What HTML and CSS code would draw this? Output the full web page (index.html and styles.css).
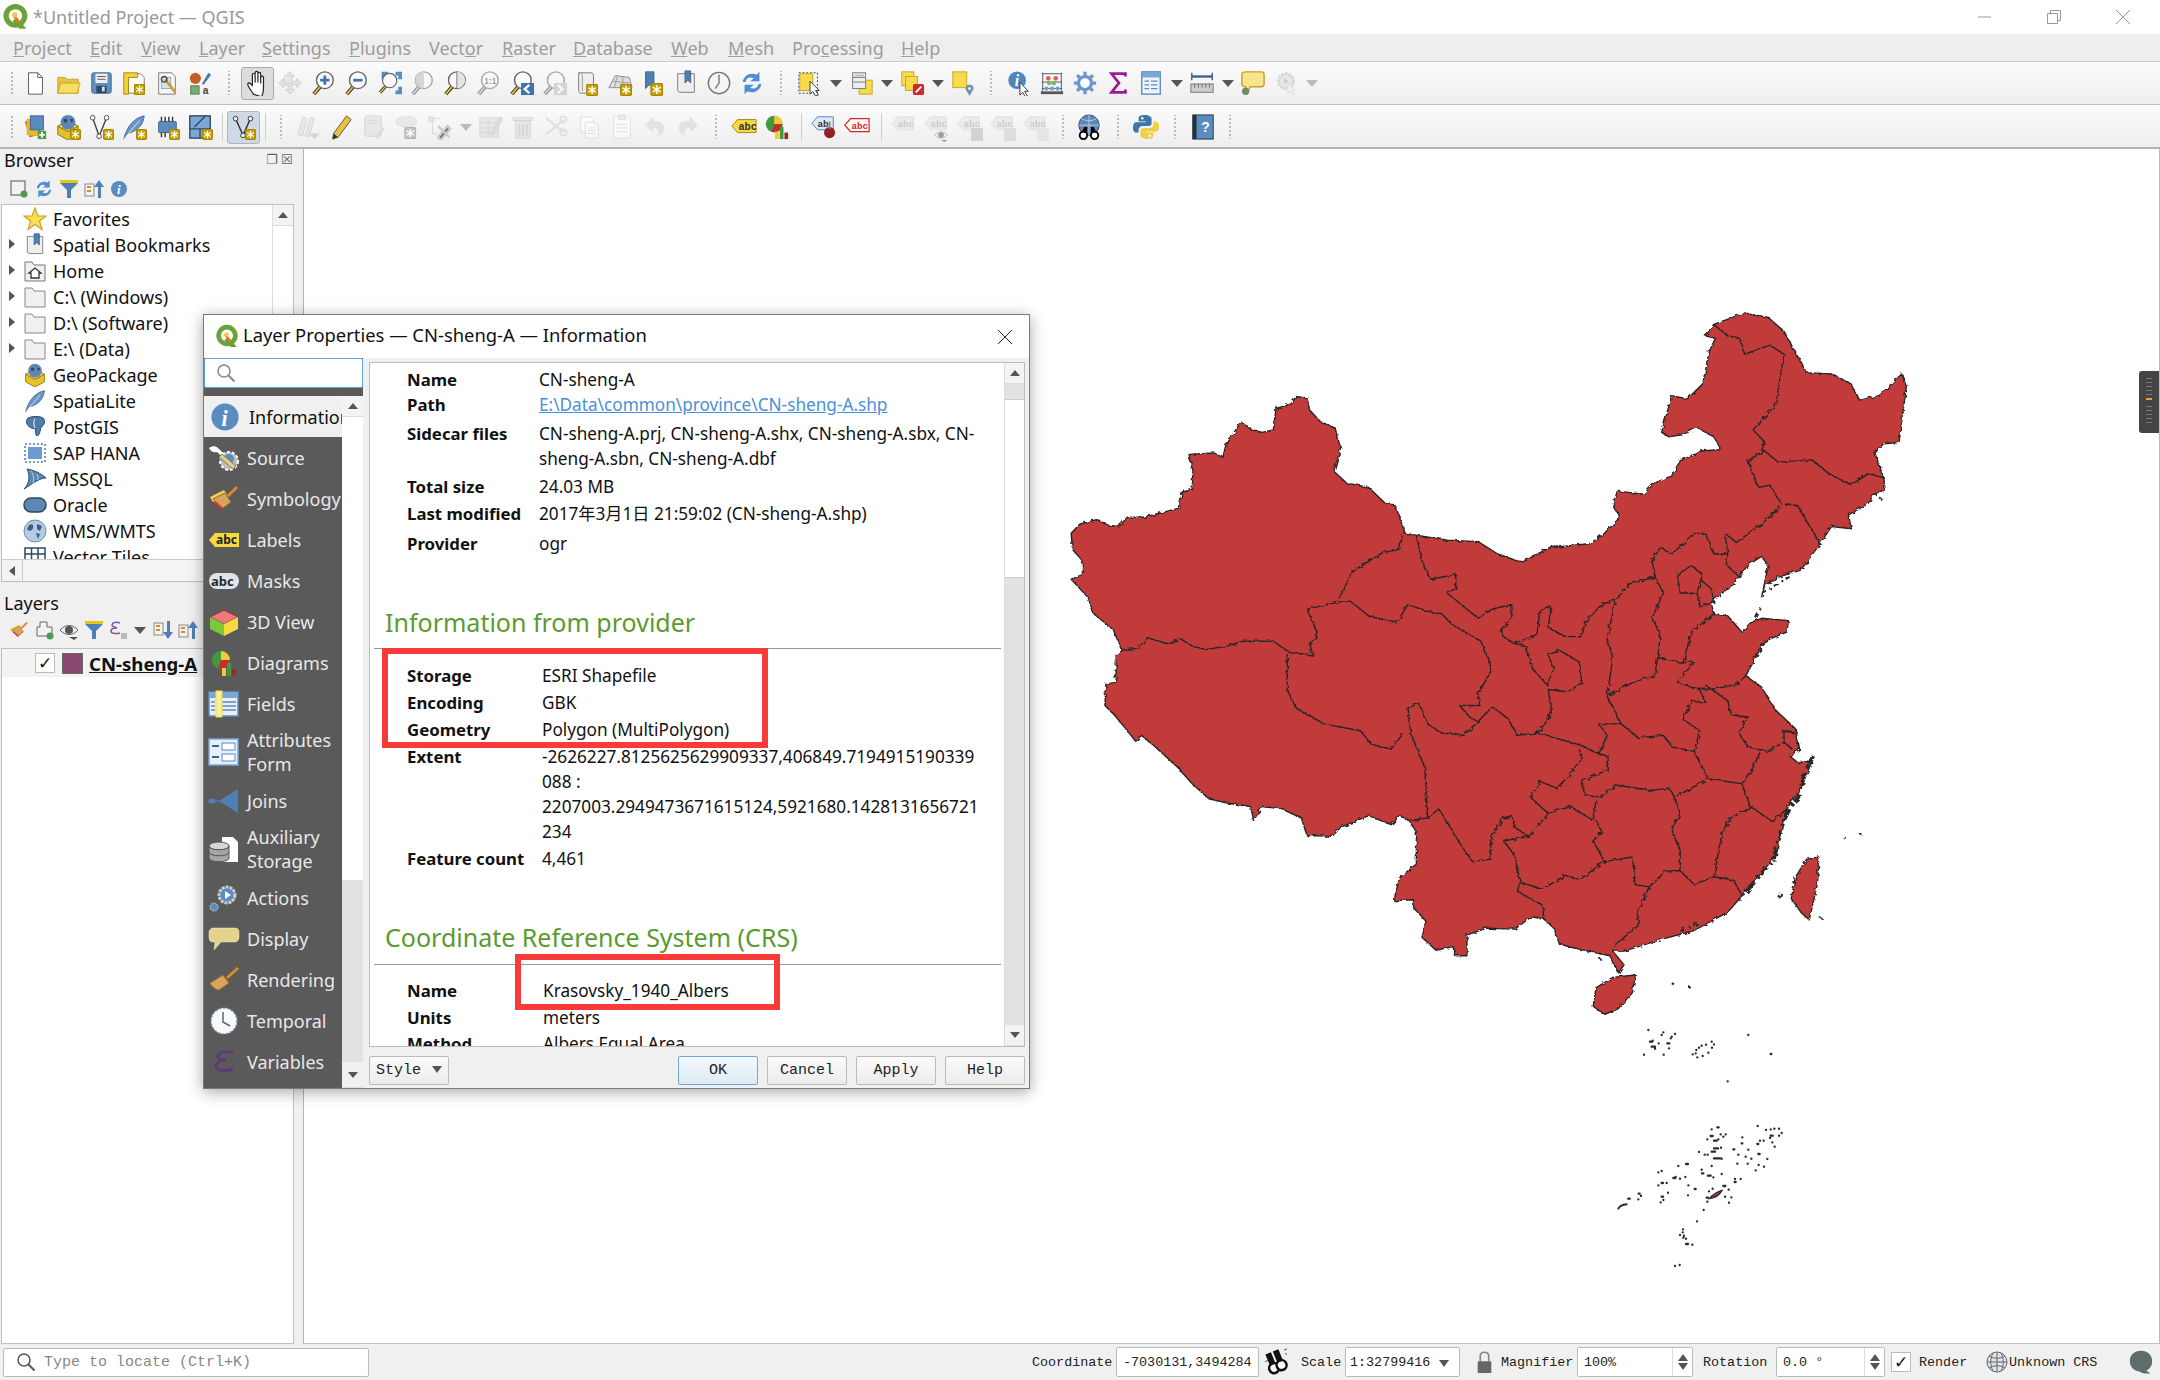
FILE: index.html
```html
<!DOCTYPE html>
<html lang="en">
<head>
<meta charset="utf-8">
<title>*Untitled Project — QGIS</title>
<link rel="stylesheet" href="styles.css">
</head>
<body>
<svg class="defs" width="0" height="0">
  <defs>
    <filter id="rough" x="-2%" y="-2%" width="104%" height="104%">
      <feTurbulence type="fractalNoise" baseFrequency="0.11" numOctaves="2" seed="4" result="n"/>
      <feDisplacementMap in="SourceGraphic" in2="n" scale="9"/>
    </filter>
    <symbol id="logo" viewBox="0 0 24 24"><circle cx="11.5" cy="11" r="8" fill="#fff" stroke="#6aa33a" stroke-width="4.5"/><path d="M13 13l8 9h-6l-6-7z" fill="#6aa33a"/><path d="M10 9l6 7-3 1-4-6z" fill="#ee7913"/><circle cx="11" cy="10" r="2.2" fill="#f2c94c"/></symbol>
    <symbol id="badge" viewBox="0 0 10 10"><rect x=".5" y=".5" width="9" height="9" rx="1" fill="#c9a100" stroke="#a88600"/><path d="M5 1.5v7M2 3.2l6 3.6M8 3.2L2 6.8" stroke="#fff" stroke-width="1.2"/></symbol>
    <symbol id="mag" viewBox="0 0 28 28"><path d="M4 26l7-8" stroke="#222" stroke-width="4"/><path d="M4 26l7-8" stroke="#e9c13a" stroke-width="2"/><circle cx="16" cy="11" r="9" fill="#fafafa" stroke="#666" stroke-width="1.5"/></symbol>
    <symbol id="new" viewBox="0 0 28 28"><path d="M7 3h10l5 5v18H7z" fill="#fff" stroke="#555"/><path d="M17 3v5h5" fill="none" stroke="#555"/></symbol>
    <symbol id="open" viewBox="0 0 28 28"><path d="M3 8h8l2 2h12v15H3z" fill="#e6c24a" stroke="#c9a227"/><path d="M3 25l3-11h21l-3 11z" fill="#f8dc66" stroke="#c9a227"/></symbol>
    <symbol id="save" viewBox="0 0 28 28"><rect x="4" y="3" width="21" height="22" rx="2" fill="#5f8fbf" stroke="#44698f"/><rect x="8" y="4" width="13" height="10" fill="#eee"/><path d="M10 7h9M10 10h9" stroke="#555"/><rect x="9" y="17" width="11" height="8" fill="#2f4a66"/><rect x="15" y="18" width="3" height="5" fill="#ddd"/></symbol>
    <symbol id="layout" viewBox="0 0 28 28"><path d="M8 4h13l4 4v17H8z" fill="#fff" stroke="#777"/><path d="M3 3h15v5H8v18H3z" fill="#f3d23f" stroke="#a88600"/><use href="#badge" x="14" y="15" width="12" height="12"/></symbol>
    <symbol id="print" viewBox="0 0 28 28"><path d="M5 3h14l4 4v19H5z" fill="#f7f7f7" stroke="#777"/><rect x="8" y="8" width="10" height="12" fill="#d5e2f2" stroke="#8aa5c9"/><path d="M12 10l11 14" stroke="#c9a227" stroke-width="3"/><circle cx="11" cy="10" r="3" fill="none" stroke="#555" stroke-width="1.6"/></symbol>
    <symbol id="style" viewBox="0 0 28 28"><circle cx="9" cy="9" r="6" fill="#c65c2c"/><rect x="4" y="17" width="9" height="9" fill="#7aa97a" stroke="#4f7d4f"/><path d="M16 15l7-12 3 2-8 11z" fill="#4d79ad"/><text x="17" y="26" class="svgt" font-size="11" fill="#444">a</text></symbol>
    <symbol id="pan" viewBox="0 0 28 28"><path d="M10 26c-2-4-6-8-6-11 1-2 3-1 5 2V5c0-2 3-2 3 0v8-10c0-2 3-2 3 0v10-9c0-2 3-2 3 0v10-6c0-2 3-2 3 0v11c0 5-1 7-2 10z" fill="#fff" stroke="#222" stroke-width="1.3" stroke-linejoin="round"/></symbol>
    <symbol id="pansel" viewBox="0 0 28 28"><path d="M14 2l5 5h-3v5h5V9l5 5-5 5v-3h-5v5h3l-5 5-5-5h3v-5H7v3l-5-5 5-5v3h5V7H9z" fill="#d0d4d8" stroke="#b0b4b8"/><rect x="8" y="6" width="8" height="8" fill="#ddd" stroke="#bbb"/></symbol>
    <symbol id="zin" viewBox="0 0 28 28"><use href="#mag" width="28" height="28"/><path d="M11 11h10M16 6v10" stroke="#3f73ad" stroke-width="3"/></symbol>
    <symbol id="zout" viewBox="0 0 28 28"><use href="#mag" width="28" height="28"/><path d="M11 11h10" stroke="#3f73ad" stroke-width="3"/></symbol>
    <symbol id="zfull" viewBox="0 0 28 28"><path d="M6 2h7v4H10v4H6zM21 2h7v8h-4V6h-3zM28 26h-7v-4h3v-4h4z" fill="#5b8cc0"/><use href="#mag" x="1" y="2" width="24" height="24"/></symbol>
    <symbol id="zlayer" viewBox="0 0 28 28"><use href="#mag" width="28" height="28"/><path d="M16 2a9 9 0 0 0 0 18z" fill="#bbb"/></symbol>
    <symbol id="zsel" viewBox="0 0 28 28"><use href="#mag" width="28" height="28"/><path d="M16 2a9 9 0 0 1 0 18z" fill="#e5e5e5"/><path d="M16 2v18" stroke="#777"/></symbol>
    <symbol id="z11" viewBox="0 0 28 28"><use href="#mag" width="28" height="28"/><text x="10" y="15" class="svgt" font-size="9" fill="#555">1:1</text></symbol>
    <symbol id="zlast" viewBox="0 0 28 28"><use href="#mag" width="28" height="28"/><rect x="14" y="14" width="14" height="13" fill="#3f73ad"/><path d="M23 16l-5 4.500 5 4.500" fill="none" stroke="#fff" stroke-width="2.500"/></symbol>
    <symbol id="znext" viewBox="0 0 28 28"><use href="#mag" width="28" height="28"/><rect x="14" y="14" width="14" height="13" fill="#bbb"/><path d="M18 16l5 4.500-5 4.500" fill="none" stroke="#fff" stroke-width="2.500"/></symbol>
    <symbol id="mapnew" viewBox="0 0 28 28"><path d="M5 3h13c2 0 3 1 3 3v19H8c-2 0-3-1-3-3z" fill="#eee" stroke="#777"/><path d="M5 3c3 0 4 1 4 3v17" fill="none" stroke="#999"/><use href="#badge" x="13" y="15" width="13" height="13"/></symbol>
    <symbol id="map3d" viewBox="0 0 28 28"><path d="M2 19L9 6l15 2 3 11z" fill="#ddd" stroke="#888"/><path d="M6 12l18 2M11 7l-3 12M17 7l0 12" stroke="#999"/><use href="#badge" x="14" y="15" width="13" height="13"/></symbol>
    <symbol id="bmnew" viewBox="0 0 28 28"><path d="M6 2h9v18l-5-4-4 4z" fill="#4f80b5" stroke="#3b628d"/><use href="#badge" x="11" y="14" width="14" height="14"/></symbol>
    <symbol id="bm" viewBox="0 0 28 28"><path d="M5 4h18v20H8c-2 0-3-1-3-3z" fill="#eee" stroke="#777"/><path d="M13 1h6v13l-3-3-3 3z" fill="#4f80b5" stroke="#3b628d"/></symbol>
    <symbol id="clock" viewBox="0 0 28 28"><circle cx="14" cy="14" r="11.500" fill="#f5f5f5" stroke="#777" stroke-width="1.5"/><path d="M14 5v9l-4 6" fill="none" stroke="#777" stroke-width="1.5"/></symbol>
    <symbol id="refresh" viewBox="0 0 28 28"><path d="M4 13C5 6 12 2 19 5l3-3v10H12l4-3c-4-2-8-1-9 4z" fill="#4e8ed0"/><path d="M24 15c-1 7-8 11-15 8l-3 3V16h10l-4 3c4 2 8 1 9-4z" fill="#4e8ed0"/></symbol>
    <symbol id="select" viewBox="0 0 28 28"><rect x="2" y="3" width="20" height="22" fill="none" stroke="#333" stroke-dasharray="2 2"/><rect x="3" y="4" width="14" height="18" fill="#f6dc4b" stroke="#c9a227"/><path d="M14 12v14l3-3 3 5 3-1-3-5h4z" fill="#fff" stroke="#333"/></symbol>
    <symbol id="attrsel" viewBox="0 0 28 28"><rect x="12" y="11" width="14" height="15" fill="#f6dc4b" stroke="#c9a227"/><rect x="5" y="3" width="14" height="17" fill="#eee" stroke="#777"/><path d="M5 8h14M5 13h14" stroke="#777"/><rect x="7" y="5" width="10" height="2" fill="#bbb"/></symbol>
    <symbol id="desel" viewBox="0 0 28 28"><rect x="3" y="2" width="13" height="15" fill="#f6dc4b" stroke="#c9a227"/><rect x="7" y="7" width="13" height="15" fill="#f6dc4b" stroke="#c9a227"/><rect x="15" y="15" width="12" height="12" rx="2" fill="#d02b2b"/><path d="M18 24l6-6" stroke="#fff" stroke-width="2"/></symbol>
    <symbol id="selloc" viewBox="0 0 28 28"><rect x="3" y="2" width="15" height="17" fill="#f6dc4b" stroke="#c9a227"/><path d="M21 28l-4-7c-1-3 1-5 4-5s5 2 4 5z" fill="#6f93a8"/><circle cx="21" cy="20" r="1.500" fill="#fff"/></symbol>
    <symbol id="identify" viewBox="0 0 28 28"><circle cx="12" cy="11" r="9.500" fill="#4e86bf"/><text x="9.500" y="17" class="svgi" font-size="17" fill="#fff">i</text><path d="M15 13v14l3-3 3 5 2-1-3-5h4z" fill="#fff" stroke="#333"/></symbol>
    <symbol id="abacus" viewBox="0 0 28 28"><path d="M3 4h22M4 3v22M24 3v22M3 13h22M3 20h22" stroke="#555" fill="none"/><rect x="2" y="23" width="24" height="3" fill="#555"/><circle cx="10" cy="9" r="2.500" fill="#d8635e"/><circle cx="18" cy="9" r="2.500" fill="#d8635e"/><circle cx="11" cy="14" r="2.500" fill="#7fb36b"/><circle cx="16" cy="14" r="2.500" fill="#7fb36b"/><circle cx="8" cy="20" r="2.300" fill="#6da0d4"/><circle cx="14" cy="20" r="2.300" fill="#6da0d4"/><circle cx="20" cy="20" r="2.300" fill="#6da0d4"/></symbol>
    <symbol id="gear" viewBox="0 0 28 28"><circle cx="14" cy="14" r="7" fill="#fff" stroke="#6a97cc" stroke-width="3.500"/><path d="M14 2v5M14 21v5M2 14h5M21 14h5M5.500 5.500l3.500 3.500M19 19l3.500 3.500M22.500 5.500L19 9M9 19l-3.500 3.500" stroke="#6a97cc" stroke-width="3.500"/></symbol>
    <symbol id="sigma" viewBox="0 0 28 28"><path d="M22 7V4H7l8 10-8 10h15v-3" fill="none" stroke="#9a1b9a" stroke-width="3"/></symbol>
    <symbol id="table" viewBox="0 0 28 28"><rect x="4" y="2" width="20" height="24" fill="#eef3fa" stroke="#5b8cc0" stroke-width="1.5"/><rect x="4" y="2" width="20" height="6" fill="#7ba6d6"/><path d="M7 12h5M14 12h7M7 16h5M14 16h7M7 20h5M14 20h7" stroke="#5b8cc0" stroke-width="1.5"/></symbol>
    <symbol id="measure" viewBox="0 0 28 28"><path d="M3 7h22" stroke="#3b5f86" stroke-width="2.500"/><path d="M3 3v8M25 3v8" stroke="#3b5f86" stroke-width="1.5"/><rect x="2" y="15" width="24" height="9" fill="#ccc" stroke="#777"/><path d="M6 15v4M10 15v4M14 15v4M18 15v4M22 15v4" stroke="#666"/></symbol>
    <symbol id="tip" viewBox="0 0 28 28"><path d="M6 2h17c2 0 3 1 3 3v10c0 2-1 3-3 3H11l-3 7-2-7c-3 0-4-1-4-3V5c0-2 2-3 4-3z" fill="#f8e48a" stroke="#c9a227" stroke-width="1.500"/><circle cx="6" cy="23" r="3.500" fill="#5c9b54" stroke="#777"/></symbol>
    <symbol id="action" viewBox="0 0 28 28"><circle cx="14" cy="12" r="8" fill="#ddd" stroke="#bbb" stroke-width="3" stroke-dasharray="3 1"/><path d="M12 9l5 3-5 3z" fill="#aaa"/><path d="M16 14v11l3-2 2 4 2-1-2-4h3z" fill="#eee" stroke="#ccc"/></symbol>
    <symbol id="dsm" viewBox="0 0 28 28"><path d="M3 8l13-3 5 17-13 3z" fill="#d0652c"/><path d="M5 5l14 1-1 18-13-1z" fill="#e5b72e"/><rect x="9" y="2" width="14" height="15" fill="#5b8cc0" stroke="#3b628d"/><rect x="17" y="18" width="9" height="9" fill="#4e9a4e"/><path d="M21.500 19.500v6M18.500 22.500h6" stroke="#fff" stroke-width="2"/></symbol>
    <symbol id="gpkg" viewBox="0 0 28 28"><path d="M3 13l11 6 11-6v9l-11 6-11-6z" fill="#e6c229" stroke="#8a7410"/><path d="M3 13l11-6 11 6-11 6z" fill="#f4da55" stroke="#8a7410"/><circle cx="14" cy="9" r="8" fill="#5f87b5"/><path d="M9 6c3-2 5 0 4 2s-4 2-4-2zM16 5l4 1-2 4z" fill="#2d4a6d"/></symbol>
    <symbol id="shp" viewBox="0 0 28 28"><path d="M5 4l7 20 8-20" fill="none" stroke="#444" stroke-width="1.500"/><circle cx="5" cy="4" r="2.500" fill="#fff" stroke="#444"/><circle cx="20" cy="4" r="2.500" fill="#fff" stroke="#444"/><circle cx="12" cy="24" r="2.500" fill="#fff" stroke="#444"/></symbol>
    <symbol id="feather" viewBox="0 0 28 28"><path d="M3 27C6 14 14 4 25 2c-1 9-6 16-18 19z" fill="#6d95c4" stroke="#3f6ba3"/><path d="M3 27L20 7" stroke="#e8eef6"/></symbol>
    <symbol id="chip" viewBox="0 0 28 28"><rect x="5" y="8" width="19" height="12" rx="1" fill="#5b8cc0" stroke="#3b628d"/><path d="M8 3v5M12 3v5M16 3v5M20 3v5M8 20v5M12 20v5" stroke="#333" stroke-width="1.500"/></symbol>
    <symbol id="grid" viewBox="0 0 28 28"><rect x="3" y="2" width="22" height="24" fill="#7ba6d6" stroke="#2f4a66" stroke-width="1.500"/><path d="M3 16h22M14 16v10M8 14L20 2" stroke="#2f4a66" stroke-width="1.500"/></symbol>
    <symbol id="vtx" viewBox="0 0 28 28"><path d="M6 5l8 18 8-18" fill="none" stroke="#333" stroke-width="1.500"/><circle cx="6" cy="5" r="2.500" fill="#eee" stroke="#333"/><circle cx="22" cy="5" r="2.500" fill="#eee" stroke="#333"/><circle cx="14" cy="23" r="2.500" fill="#eee" stroke="#333"/></symbol>
    <symbol id="edits" viewBox="0 0 28 28"><path d="M3 22L8 3l5 2-5 19zM11 24l6-21 4 2-6 19z" fill="#ddd" stroke="#bbb"/><path d="M15 21h12l-6 6z" fill="#bbb"/></symbol>
    <symbol id="pencil" viewBox="0 0 28 28"><path d="M6 21L20 2l5 4-14 19-6 2z" fill="#e9c13a" stroke="#555"/><path d="M6 21l5 4-6 2z" fill="#333"/></symbol>
    <symbol id="savee" viewBox="0 0 28 28"><rect x="4" y="2" width="18" height="22" rx="2" fill="#ddd" stroke="#bbb"/><path d="M8 7h10M8 10h10" stroke="#bbb"/><path d="M15 25l8-11 3 2-8 11z" fill="#ccc"/></symbol>
    <symbol id="addpoly" viewBox="0 0 28 28"><path d="M3 6c5-4 10-4 16-3s7 8 3 9l-6 3-8-2c-4 0-7-3-5-7z" fill="#ddd" stroke="#ccc"/><use href="#badge" x="11" y="14" width="13" height="13"/></symbol>
    <symbol id="vtool" viewBox="0 0 28 28"><path d="M4 5h10M6 5v16M4 5v4M6 21h5" stroke="#bbb" fill="none"/><rect x="2" y="3" width="5" height="5" fill="#ddd" stroke="#bbb"/><path d="M12 25l10-12 3 3-10 12zM12 13l12 12" stroke="#aaa" stroke-width="2.500"/></symbol>
    <symbol id="edit2" viewBox="0 0 28 28"><rect x="3" y="4" width="20" height="21" fill="#ddd" stroke="#c4c4a8"/><path d="M3 9h20M3 15h20M3 20h20M12 4v21" stroke="#bbb"/><path d="M14 22L25 3l3 2-11 18z" fill="#ccc" stroke="#bbb"/></symbol>
    <symbol id="trash" viewBox="0 0 28 28"><path d="M3 4h22v3H3zM6 8h16v18H6z" fill="#ddd" stroke="#c4bcbc"/><path d="M10 11v12M14 11v12M18 11v12" stroke="#bbb" stroke-width="2"/></symbol>
    <symbol id="cut" viewBox="0 0 28 28"><path d="M3 4l20 16M3 22L23 6" stroke="#ccc" stroke-width="2"/><circle cx="22" cy="6" r="3.500" fill="none" stroke="#ccc" stroke-width="2"/><circle cx="22" cy="20" r="3.500" fill="none" stroke="#ccc" stroke-width="2"/></symbol>
    <symbol id="copy" viewBox="0 0 28 28"><path d="M5 3h11l3 3v14H5z" fill="#fff" stroke="#ccc"/><path d="M10 9h11l3 3v14H10z" fill="#fff" stroke="#ccc"/><path d="M13 15h8M13 18h8M13 21h8" stroke="#ccc"/></symbol>
    <symbol id="paste" viewBox="0 0 28 28"><rect x="5" y="3" width="18" height="23" fill="#fff" stroke="#ccc"/><rect x="10" y="1" width="8" height="5" fill="#ddd" stroke="#ccc"/><path d="M8 11h12M8 15h12M8 19h12" stroke="#ccc"/></symbol>
    <symbol id="undo" viewBox="0 0 28 28"><path d="M12 3L3 12l9 8v-5c4 0 6 2 6 5 0 2-2 4-2 4 6-2 8-6 8-9 0-5-5-8-12-8z" fill="#d5d5d5"/></symbol>
    <symbol id="redo" viewBox="0 0 28 28"><path d="M16 3l9 9-9 8v-5c-4 0-6 2-6 5 0 2 2 4 2 4-6-2-8-6-8-9 0-5 5-8 12-8z" fill="#d5d5d5"/></symbol>
    <symbol id="tagY" viewBox="0 0 28 28"><path d="M1 13l6-7h20v14H7z" fill="#f4d93f" stroke="#9a8410"/><text x="8" y="17" class="svgm" font-size="11" fill="#333">abc</text></symbol>
    <symbol id="diag" viewBox="0 0 28 28"><circle cx="11" cy="11" r="9" fill="#3d9b3d"/><path d="M11 11V2a9 9 0 0 1 9 9z" fill="#f3c93c"/><path d="M11 11h9a9 9 0 0 1-12 8z" fill="#c92b2b"/><rect x="12" y="19" width="4" height="8" fill="#f3c93c"/><rect x="17" y="14" width="4" height="13" fill="#3d9b3d"/><rect x="22" y="20" width="4" height="7" fill="#9b2b2b"/></symbol>
    <symbol id="tagB" viewBox="0 0 28 28"><path d="M1 10l6-7h17v14H7z" fill="#dbe9f8" stroke="#4f80b5"/><text x="7" y="14" class="svgm" font-size="10" fill="#333">ab</text><circle cx="20" cy="20" r="6" fill="#8e2323"/><path d="M20 8v8" stroke="#888" stroke-width="2"/></symbol>
    <symbol id="tagR" viewBox="0 0 28 28"><path d="M1 12l6-7h20v14H7z" fill="#fff" stroke="#e02020" stroke-width="1.300"/><text x="8" y="16" class="svgm" font-size="10" fill="#e02020">abc</text></symbol>
    <symbol id="tagG" viewBox="0 0 28 28"><path d="M1 10l6-7h17v14H7z" fill="#e5e3da" stroke="#ccc"/><text x="7" y="14" class="svgm" font-size="10" fill="#aaa">abc</text></symbol>
    <symbol id="meta" viewBox="0 0 28 28"><circle cx="14" cy="12" r="11" fill="#5f87b5" stroke="#2f4a66"/><path d="M3 12h22M14 1v22M6 5c5 3 11 3 16 0" fill="none" stroke="#b9cee5"/><circle cx="8" cy="23" r="4" fill="#fff" stroke="#000" stroke-width="2"/><circle cx="20" cy="23" r="4" fill="#fff" stroke="#000" stroke-width="2"/><path d="M6 20l3-6h3v6zM22 20l-3-6h-3v6z" fill="#000"/></symbol>
    <symbol id="extents" viewBox="0 0 24 28"><g transform="rotate(-22 12 14)"><rect x="5" y="3" width="6" height="12" fill="#111"/><rect x="13" y="3" width="6" height="12" fill="#111"/><circle cx="8" cy="19" r="5" fill="#fff" stroke="#111" stroke-width="2.500"/><circle cx="16" cy="19" r="5" fill="#fff" stroke="#111" stroke-width="2.500"/></g><path d="M20 2l3-1M21 6h2M4 12l-3 2" stroke="#555"/></symbol>
    <symbol id="python" viewBox="0 0 28 28"><path d="M13 1c-5 0-7 1-7 4v3h8v1H4c-3 0-4 2-4 6s2 5 4 5h2v-3c0-2 2-4 4-4h7c2 0 3-1 3-3V5c0-2-3-4-7-4z" fill="#3f76a8"/><path d="M15 27c5 0 7-1 7-4v-3h-8v-1h10c3 0 4-2 4-6s-2-5-4-5h-2v3c0 2-2 4-4 4h-7c-2 0-3 1-3 3v5c0 2 3 4 7 4z" fill="#f2cf4a"/><circle cx="10" cy="4.500" r="1.300" fill="#fff"/><circle cx="18" cy="23.500" r="1.300" fill="#fff"/></symbol>
    <symbol id="helpb" viewBox="0 0 28 28"><rect x="3" y="1" width="22" height="26" fill="#5b8cc0" stroke="#24303d"/><rect x="3" y="1" width="4" height="26" fill="#24303d"/><text x="12" y="19" class="svgt" font-size="15" fill="#fff">?</text></symbol>
    <symbol id="star" viewBox="0 0 24 24"><path d="M12 1l3 8h8l-6.500 5 2.500 8.500L12 17.500 5 22.500 7.500 14 1 9h8z" fill="#f7e04e" stroke="#c9a227" stroke-width="1.200"/></symbol>
    <symbol id="folder" viewBox="0 0 24 24"><path d="M2 3h7l2 3h11v16H2z" fill="#f0f0f0" stroke="#888"/></symbol>
    <symbol id="home" viewBox="0 0 24 24"><path d="M2 3h7l2 3h11v16H2z" fill="#f0f0f0" stroke="#777"/><path d="M6 14l6-5 6 5h-2v5H8v-5z" fill="#fff" stroke="#333" stroke-width="1.300"/></symbol>
    <symbol id="hana" viewBox="0 0 24 24"><rect x="2" y="3" width="20" height="18" fill="none" stroke="#4f7cac" stroke-dasharray="2 2" stroke-width="1.500"/><rect x="5" y="6" width="14" height="12" fill="#6d9ad0"/></symbol>
    <symbol id="pg" viewBox="0 0 24 24"><path d="M5 3c4-2 12-2 15 0 3 3 1 8-2 9-1 4-1 8-4 9-2-1-1-5-2-8-2 1-4 0-5-1-3-1-5-6-2-9z" fill="#4f7cac" stroke="#2f4a66"/><path d="M12 4c-2 3-1 7 0 9" fill="none" stroke="#fff"/></symbol>
    <symbol id="mssql" viewBox="0 0 24 24"><path d="M1 22C7 16 7 8 4 2c6 1 14 4 19 9-6 0-11 4-22 11z" fill="#5b87b5" stroke="#2f4a66"/><path d="M8 4c3 4 3 9 2 13M14 7c1 2 1 5 1 6" stroke="#b9cee5" fill="none"/></symbol>
    <symbol id="oracle" viewBox="0 0 24 24"><rect x="1" y="5" width="22" height="14" rx="7" fill="#5f87b5" stroke="#2f4a66" stroke-width="1.500"/></symbol>
    <symbol id="globe" viewBox="0 0 24 24"><circle cx="12" cy="12" r="11" fill="#b4cbe4" stroke="#6c8fb5"/><path d="M6 6c3-2 5 0 4 3s-4 4-6 1zM14 5l5 2-2 5-3-2zM13 14l4 1-2 5z" fill="#3f5c80"/></symbol>
    <symbol id="vt" viewBox="0 0 24 24"><rect x="2" y="3" width="20" height="18" fill="#fff" stroke="#2f4a66" stroke-width="1.500"/><path d="M2 9h20M2 15h20M8.500 3v18M15 3v18" stroke="#2f4a66" stroke-width="1.500"/></symbol>
    <symbol id="wrench" viewBox="0 0 32 28"><path d="M1 4c4-3 8-2 10 1l12 11-3 2L9 8C6 9 3 8 1 4z" fill="#fff"/><circle cx="21" cy="17" r="9" fill="#bcbcbc" stroke="#fff" stroke-dasharray="3 2" stroke-width="2"/><circle cx="21" cy="15" r="5" fill="#5b8cc0"/><path d="M14 10l14 12-3 3-14-12z" fill="#e6cf7a" stroke="#777"/></symbol>
    <symbol id="brush" viewBox="0 0 32 28"><path d="M2 14l14-5 5 8-7 8z" fill="#e03030"/><path d="M2 12L16 5l4 6-15 6z" fill="#f2cf4a"/><path d="M5 14l12-6 6 9-8 6z" fill="#d8a35c" stroke="#996b2c"/><path d="M20 11l9-9" stroke="#d68b2c" stroke-width="3"/></symbol>
    <symbol id="labelT" viewBox="0 0 32 28"><path d="M1 14l6-7h24v14H7z" fill="#f4d93f"/><text x="8" y="18" class="svgb" font-size="12" fill="#222">abc</text></symbol>
    <symbol id="masks" viewBox="0 0 32 28"><rect x="1" y="6" width="30" height="16" rx="8" fill="#dfe3ea"/><text x="3" y="19" class="svgb" font-size="13" fill="#2a2a30">abc</text></symbol>
    <symbol id="box3d" viewBox="0 0 32 28"><path d="M2 9l14-7 14 7-14 7z" fill="#ec7878" stroke="#8f3030"/><path d="M2 9v12l14 7V16z" fill="#7fc63a"/><path d="M30 9v12l-14 7V16z" fill="#f4d93f"/></symbol>
    <symbol id="fields" viewBox="0 0 32 28"><rect x="1" y="2" width="29" height="24" fill="#e8eff8" stroke="#5b8cc0" stroke-width="1.500"/><rect x="1" y="2" width="29" height="6" fill="#7ba6d6"/><path d="M14 12h14M14 16h14M14 20h14M3 12h4M3 16h4M3 20h4" stroke="#5b8cc0" stroke-width="1.500"/><rect x="8" y="1" width="6" height="26" fill="#f6ef9f" stroke="#f2e23b"/></symbol>
    <symbol id="form" viewBox="0 0 32 28"><rect x="1" y="1" width="29" height="26" fill="#e8eff8" stroke="#7ba6d6" stroke-width="1.500"/><rect x="14" y="5" width="13" height="7" fill="#fff" stroke="#5b8cc0"/><rect x="14" y="16" width="13" height="7" fill="#fff" stroke="#5b8cc0"/><path d="M4 8h7M4 19h7" stroke="#3b628d" stroke-width="2"/></symbol>
    <symbol id="joins" viewBox="0 0 32 28"><path d="M30 2v24L11 14z" fill="#4f80b5"/><ellipse cx="4" cy="14" rx="3.500" ry="2.500" fill="#4f80b5"/><path d="M7 14h5" stroke="#4f80b5"/></symbol>
    <symbol id="aux" viewBox="0 0 32 28"><path d="M14 2h11l5 5v20H14z" fill="#fff"/><ellipse cx="11" cy="11" rx="10" ry="4" fill="#d5d5d5" stroke="#555"/><path d="M1 11v12c0 5 20 5 20 0V11c0 5-20 5-20 0z" fill="#a5a5a5" stroke="#555"/><path d="M1 17c0 5 20 5 20 0" fill="none" stroke="#555"/></symbol>
    <symbol id="actions" viewBox="0 0 32 28"><circle cx="19" cy="11" r="8" fill="#5b8cc0" stroke="#ccc" stroke-width="3" stroke-dasharray="3 1"/><path d="M17 7l6 4-6 4z" fill="#fff"/><circle cx="6" cy="23" r="4" fill="#5b8cc0" stroke="#ccc" stroke-dasharray="2 1"/></symbol>
    <symbol id="display" viewBox="0 0 32 28"><path d="M5 3h22c3 0 4 2 4 4v5c0 3-2 5-4 5H13l-7 8 1-8H5c-3 0-4-2-4-5V7c0-2 2-4 4-4z" fill="#e3d38b" stroke="#fff" stroke-opacity=".4"/></symbol>
    <symbol id="render" viewBox="0 0 32 28"><path d="M2 17l13-8 6 8-10 7c-3 0-7-3-9-7z" fill="#d8a35c" stroke="#996b2c"/><path d="M19 12L30 2" stroke="#d68b2c" stroke-width="3"/></symbol>
    <symbol id="temporal" viewBox="0 0 32 28"><circle cx="16" cy="14" r="13" fill="#fafafa" stroke="#6c8fb5" stroke-dasharray="2 2" stroke-width="1.500"/><path d="M15 5v10l7 4" fill="none" stroke="#666" stroke-width="1.500"/></symbol>
    <symbol id="eps" viewBox="0 0 32 28"><path d="M25 5c-6-3-15-1-15 3 0 3 4 4 8 4-5 0-10 2-10 6 0 5 10 6 17 3" fill="none" stroke="#5c3a78" stroke-width="3"/></symbol>
    <symbol id="plusbox" viewBox="0 0 20 20"><rect x="2" y="2" width="14" height="14" fill="#f2f2f2" stroke="#555"/><circle cx="15" cy="15" r="3.500" fill="#4e9a4e"/></symbol>
    <symbol id="filter" viewBox="0 0 20 20"><path d="M1 1h18v3H1z" fill="#e5c61f"/><path d="M1 4h18l-7 7v8H8v-8z" fill="#4f80b5"/></symbol>
    <symbol id="expand" viewBox="0 0 20 20"><rect x="1" y="5" width="9" height="12" fill="#f2f2f2" stroke="#888"/><path d="M3 8h4M3 12h4" stroke="#d68b2c" stroke-width="2"/><path d="M14 19V8h-4l5-7 5 7h-3v11z" fill="#4f80b5"/></symbol>
    <symbol id="collapse" viewBox="0 0 20 20"><rect x="1" y="3" width="9" height="12" fill="#f2f2f2" stroke="#888"/><path d="M3 6h4M3 10h4" stroke="#d68b2c" stroke-width="2"/><path d="M14 1v11h-4l5 7 5-7h-3V1z" fill="#4f80b5"/></symbol>
    <symbol id="info" viewBox="0 0 20 20"><circle cx="10" cy="10" r="8" fill="#5b8cc0"/><text x="8" y="15" class="svgi" font-size="13" fill="#fff">i</text></symbol>
    <symbol id="eye" viewBox="0 0 20 20"><path d="M1 10c5-6 13-6 18 0-5 6-13 6-18 0z" fill="#eee" stroke="#666"/><circle cx="10" cy="10" r="4" fill="#555"/><path d="M10 17h9l-4 3z" fill="#555"/></symbol>
    <symbol id="addgroup" viewBox="0 0 20 20"><path d="M6 2h7v5h5v9H3V7h3z" fill="#f2f2f2" stroke="#666"/><circle cx="16" cy="16" r="3.500" fill="#4e9a4e"/></symbol>
    <symbol id="epsS" viewBox="0 0 20 20"><path d="M11 3c-4-2-8 0-8 2s3 2 5 3c-3 0-6 1-6 3 0 3 6 3 9 2" fill="none" stroke="#7a5a9a" stroke-width="1.500"/><rect x="12" y="13" width="6" height="6" fill="#bbb"/></symbol>
    <symbol id="crsglobe" viewBox="0 0 24 24"><circle cx="12" cy="12" r="10" fill="#dfe5ea" stroke="#666"/><path d="M2 12h20M12 2v20M4 6c5 3 11 3 16 0M4 18c5-3 11-3 16 0M8 3c-3 6-3 12 0 18M16 3c3 6 3 12 0 18" fill="none" stroke="#666"/></symbol>
  </defs>
</svg>

<header class="titlebar">
  <svg class="logo"><use href="#logo"/></svg>
  <span class="apptitle">*Untitled Project — QGIS</span>
  <div class="winbtns">
    <svg class="winbtn" viewBox="0 0 16 16"><path d="M1 8h13" stroke="#999"/></svg>
    <svg class="winbtn" viewBox="0 0 16 16"><path d="M1.500 4.500h10v10h-10zM4.500 4V1.500h10v10H12" fill="none" stroke="#999"/></svg>
    <svg class="winbtn" viewBox="0 0 16 16"><path d="M1 1l14 14M15 1L1 15" stroke="#999"/></svg>
  </div>
</header>

<nav class="menubar">
  <span class="mi w-project"><u>P</u>roject</span>
  <span class="mi w-edit"><u>E</u>dit</span>
  <span class="mi w-view"><u>V</u>iew</span>
  <span class="mi w-layer"><u>L</u>ayer</span>
  <span class="mi w-settings"><u>S</u>ettings</span>
  <span class="mi w-plugins"><u>P</u>lugins</span>
  <span class="mi w-vector">Vect<u>o</u>r</span>
  <span class="mi w-raster"><u>R</u>aster</span>
  <span class="mi w-database"><u>D</u>atabase</span>
  <span class="mi w-web"><u>W</u>eb</span>
  <span class="mi w-mesh"><u>M</u>esh</span>
  <span class="mi w-proc">Pro<u>c</u>essing</span>
  <span class="mi"><u>H</u>elp</span>
</nav>

<div class="toolbar tb1">
  <i class="grip g15"></i>
  <b class="ti"><svg><use href="#new"/></svg></b>
  <b class="ti"><svg><use href="#open"/></svg></b>
  <b class="ti"><svg><use href="#save"/></svg></b>
  <b class="ti"><svg><use href="#layout"/></svg></b>
  <b class="ti"><svg><use href="#print"/></svg></b>
  <b class="ti"><svg><use href="#style"/></svg></b>
  <i class="grip g24"></i>
  <b class="ti on"><svg><use href="#pan"/></svg></b>
  <b class="ti off"><svg><use href="#pansel"/></svg></b>
  <b class="ti"><svg><use href="#zin"/></svg></b>
  <b class="ti"><svg><use href="#zout"/></svg></b>
  <b class="ti"><svg><use href="#zfull"/></svg></b>
  <b class="ti off"><svg><use href="#zlayer"/></svg></b>
  <b class="ti"><svg><use href="#zsel"/></svg></b>
  <b class="ti off"><svg><use href="#z11"/></svg></b>
  <b class="ti"><svg><use href="#zlast"/></svg></b>
  <b class="ti off"><svg><use href="#znext"/></svg></b>
  <b class="ti"><svg><use href="#mapnew"/></svg></b>
  <b class="ti"><svg><use href="#map3d"/></svg></b>
  <b class="ti"><svg><use href="#bmnew"/></svg></b>
  <b class="ti"><svg><use href="#bm"/></svg></b>
  <b class="ti"><svg><use href="#clock"/></svg></b>
  <b class="ti"><svg><use href="#refresh"/></svg></b>
  <i class="grip g25"></i>
  <b class="ti"><svg><use href="#select"/></svg></b><i class="caret"></i>
  <b class="ti"><svg><use href="#attrsel"/></svg></b><i class="caret"></i>
  <b class="ti"><svg><use href="#desel"/></svg></b><i class="caret"></i>
  <b class="ti"><svg><use href="#selloc"/></svg></b>
  <i class="grip g23"></i>
  <b class="ti"><svg><use href="#identify"/></svg></b>
  <b class="ti"><svg><use href="#abacus"/></svg></b>
  <b class="ti"><svg><use href="#gear"/></svg></b>
  <b class="ti"><svg><use href="#sigma"/></svg></b>
  <b class="ti"><svg><use href="#table"/></svg></b><i class="caret"></i>
  <b class="ti"><svg><use href="#measure"/></svg></b><i class="caret"></i>
  <b class="ti"><svg><use href="#tip"/></svg></b>
  <b class="ti off"><svg><use href="#action"/></svg></b><i class="caret off"></i>
</div>

<div class="toolbar tb2">
  <i class="grip g15"></i>
  <b class="ti"><svg><use href="#dsm"/></svg></b>
  <b class="ti"><svg><use href="#gpkg"/><use href="#badge" x="15" y="15" width="11" height="11"/></svg></b>
  <b class="ti"><svg><use href="#shp"/><use href="#badge" x="15" y="15" width="11" height="11"/></svg></b>
  <b class="ti"><svg><use href="#feather"/><use href="#badge" x="15" y="15" width="11" height="11"/></svg></b>
  <b class="ti"><svg><use href="#chip"/><use href="#badge" x="15" y="15" width="11" height="11"/></svg></b>
  <b class="ti"><svg><use href="#grid"/><use href="#badge" x="15" y="15" width="11" height="11"/></svg></b>
  <i class="sep s10"></i>
  <b class="ti on2"><svg><use href="#vtx"/><use href="#badge" x="15" y="15" width="11" height="11"/></svg></b>
  <i class="sep s10"></i>
  <i class="grip g22"></i>
  <b class="ti off"><svg><use href="#edits"/></svg></b>
  <b class="ti"><svg><use href="#pencil"/></svg></b>
  <b class="ti off"><svg><use href="#savee"/></svg></b>
  <b class="ti off"><svg><use href="#addpoly"/></svg></b>
  <b class="ti off"><svg><use href="#vtool"/></svg></b><i class="caret off c14"></i>
  <b class="ti off"><svg><use href="#edit2"/></svg></b>
  <b class="ti off"><svg><use href="#trash"/></svg></b>
  <b class="ti off"><svg><use href="#cut"/></svg></b>
  <b class="ti off"><svg><use href="#copy"/></svg></b>
  <b class="ti off"><svg><use href="#paste"/></svg></b>
  <b class="ti off"><svg><use href="#undo"/></svg></b>
  <b class="ti off"><svg><use href="#redo"/></svg></b>
  <i class="grip g23"></i>
  <b class="ti"><svg><use href="#tagY"/></svg></b>
  <b class="ti"><svg><use href="#diag"/></svg></b>
  <i class="sep s8"></i>
  <b class="ti"><svg><use href="#tagB"/></svg></b>
  <b class="ti"><svg><use href="#tagR"/></svg></b>
  <i class="sep s8"></i>
  <b class="ti off"><svg><use href="#tagG"/></svg></b>
  <b class="ti off"><svg><use href="#tagG"/><use href="#eye" x="10" y="14" width="14" height="14"/></svg></b>
  <b class="ti off"><svg><use href="#tagG"/><rect x="14" y="14" width="12" height="13" fill="#bbb"/></svg></b>
  <b class="ti off"><svg><use href="#tagG"/><rect x="14" y="14" width="12" height="13" fill="#ccc"/></svg></b>
  <b class="ti off"><svg><use href="#tagG"/><rect x="14" y="14" width="12" height="13" fill="#ddd"/></svg></b>
  <i class="grip g20"></i>
  <b class="ti"><svg><use href="#meta"/></svg></b>
  <i class="grip g24"></i>
  <b class="ti"><svg><use href="#python"/></svg></b>
  <i class="grip g24"></i>
  <b class="ti"><svg><use href="#helpb"/></svg></b>
  <i class="grip g20"></i>
</div>

<main class="main">
  <aside class="docks">
    <section class="dock browser">
      <div class="dockhead">
        <span>Browser</span>
        <span class="dockbtns"><i class="dbtn">❐</i><i class="dbtn">☒</i></span>
      </div>
      <div class="minibar">
        <svg><use href="#plusbox"/></svg>
        <svg><use href="#refresh"/></svg>
        <svg><use href="#filter"/></svg>
        <svg><use href="#expand"/></svg>
        <svg><use href="#info"/></svg>
      </div>
      <div class="treeframe">
        <div class="tree">
          <div class="node"><svg><use href="#star"/></svg>Favorites</div>
          <div class="node arrow"><svg><use href="#bm"/></svg>Spatial Bookmarks</div>
          <div class="node arrow"><svg><use href="#home"/></svg>Home</div>
          <div class="node arrow"><svg><use href="#folder"/></svg>C:\ (Windows)</div>
          <div class="node arrow"><svg><use href="#folder"/></svg>D:\ (Software)</div>
          <div class="node arrow"><svg><use href="#folder"/></svg>E:\ (Data)</div>
          <div class="node"><svg><use href="#gpkg"/></svg>GeoPackage</div>
          <div class="node"><svg><use href="#feather"/></svg>SpatiaLite</div>
          <div class="node"><svg><use href="#pg"/></svg>PostGIS</div>
          <div class="node"><svg><use href="#hana"/></svg>SAP HANA</div>
          <div class="node"><svg><use href="#mssql"/></svg>MSSQL</div>
          <div class="node"><svg><use href="#oracle"/></svg>Oracle</div>
          <div class="node"><svg><use href="#globe"/></svg>WMS/WMTS</div>
          <div class="node"><svg><use href="#vt"/></svg>Vector Tiles</div>
        </div>
        <div class="vbar"><i class="sbtn"><em class="up"></em></i></div>
        <div class="hbar"><i class="sbtn h"><em class="left"></em></i></div>
      </div>
    </section>
    <section class="dock layers">
      <div class="dockhead lh"><span>Layers</span></div>
      <div class="minibar">
        <svg><use href="#brush"/></svg>
        <svg><use href="#addgroup"/></svg>
        <svg><use href="#eye"/></svg>
        <svg><use href="#filter"/></svg>
        <svg><use href="#epsS"/></svg>
        <i class="caret small"></i>
        <svg><use href="#collapse"/></svg>
        <svg><use href="#expand"/></svg>
      </div>
      <div class="layertree">
        <div class="layerrow">
          <i class="check">✓</i><i class="swatch"></i><span class="lname">CN-sheng-A</span>
        </div>
      </div>
    </section>
  </aside>
  <div class="canvas">
    <svg class="map" viewBox="0 0 1568 2178" preserveAspectRatio="none">
      <g filter="url(#rough)" class="mapg">
        <path class="land" d="M20 530L35 510 65 500 88 513 105 515 120 495 150 495 212 475 218 440 235 435 237 395 230 358 275 355 290 365 295 340 322 287 340 303 360 310 380 305 385 258 412 248 420 232 440 235 445 262 465 288 490 300 500 345 488 395 510 420 550 430 580 465 597 468 615 530 640 535 690 545 745 548 780 575 815 590 825 592 870 562 945 552 970 530 998 495 985 470 993 438 1040 445 1060 420 1090 405 1105 372 1145 350 1178 348 1165 320 1135 300 1110 315 1085 320 1072 310 1090 230 1118 237 1145 205 1158 130 1168 105 1150 100 1165 75 1220 50 1262 60 1290 90 1330 180 1375 183 1410 205 1425 240 1460 230 1500 183 1508 210 1495 332 1467 335 1452 355 1468 410 1470 435 1450 445 1440 465 1405 490 1410 520 1375 515 1350 560 1320 610 1280 625 1255 645 1250 670 1262 600 1250 580 1225 600 1200 640 1160 680 1165 705 1190 710 1215 745 1230 725 1250 715 1298 720 1295 745 1255 765 1240 800 1222 840 1250 865 1275 915 1310 955 1318 1000 1300 1015 1315 1030 1340 1025 1320 1085 1295 1130 1285 1190 1270 1240 1215 1320 1190 1355 1130 1395 1070 1415 1005 1440 985 1440 1005 1470 995 1487 980 1450 930 1437 890 1425 880 1390 862 1370 840 1365 810 1392 760 1390 725 1405 725 1450 705 1450 700 1430 670 1438 645 1410 652 1375 630 1345 630 1328 595 1330 605 1280 635 1250 635 1180 622 1155 605 1145 590 1165 550 1145 500 1170 485 1190 440 1188 430 1150 395 1130 360 1125 345 1155 340 1125 300 1118 265 1108 235 1075 210 1040 165 990 145 970 135 983 100 930 80 905 82 858 100 855 100 795 110 785 95 740 60 705 50 670 20 630 40 620 40 590 22 565z"/>
        <path class="land" d="M1330 1240L1352 1235 1350 1290 1335 1372 1320 1355 1303 1325 1310 1280zM955 1520L985 1497 1025 1492 1020 1530 995 1565 970 1578 950 1560z"/>
        <path class="border" d="M110 785L140 780 155 757 190 770 215 760 235 775 260 783 300 775 325 765 380 765 410 790 450 795 445 770 460 750 440 695 515 675M497 672L520 615 545 595 575 572 605 565 610 535M515 675L550 710 600 725 620 685 655 700 680 705 700 730 750 765 770 825 745 880 748 905 712 905 730 930 745 940 770 908 800 935 815 970 850 965M635 535L645 590 660 630 705 620 705 650 690 660 720 690 745 715 770 695 805 685 805 715 785 740 790 755 810 770 830 775 842 825 868 860 880 825 870 795 890 785 925 810 930 855 905 875 870 870 875 910 870 935 850 965M810 770L850 750 855 700 875 690 870 735 900 755 930 755 935 725 965 685 990 675 1015 640 1060 625 1055 590 1070 560 1090 575 1130 530 1150 530 1165 575 1190 575 1185 595 1210 625M1190 575L1185 530 1205 550 1250 510 1285 470M1290 465L1315 470 1355 555M1225 372L1255 350 1280 375 1340 370 1370 400 1410 425 1440 400 1470 410M1165 75L1190 100 1210 105 1220 140 1265 120 1290 140 1280 215 1275 250 1235 305 1255 330 1250 350M1225 372L1245 430 1265 425 1285 465M990 675L975 760 985 800 975 885M1060 625L1075 660 1055 715 1070 750 1065 800 1060 840 1020 855 975 885M1065 800L1110 812 1130 810 1100 855 1140 870 1170 868 1205 860 1222 840M1110 812L1125 745 1165 705M1100 620L1125 600 1145 620 1135 660 1105 660zM1140 630L1160 650 1165 680 1140 690 1135 660M975 885L1000 945 1030 975 1075 970 1090 995 1130 1005 1140 960 1110 935 1125 895 1150 900 1140 870M1150 860L1190 895 1195 925 1225 930 1210 965 1225 995 1260 1005 1290 985 1290 960 1310 965M1290 985L1305 1000M1130 1005L1155 1065 1215 1075M1250 1000L1235 1040 1215 1075 1230 1125 1270 1158 1295 1130M1000 945L960 945 975 970 960 1010M850 965L925 990 960 1010 975 1015 975 1045 930 1070 935 1100 960 1105 990 1078 1055 1090 1085 1085 1095 1105 1155 1065M925 1000L930 1020 905 1060 885 1085 855 1070 838 1105 870 1140 910 1125 950 1155 955 1110M870 1140L850 1170 835 1190 810 1170 805 1145 790 1150 770 1190 765 1240 735 1245 715 1210 695 1170 675 1130 655 1150 650 1040 625 965 620 910 640 900 655 945 680 965 720 970 745 940M405 790L405 870 420 910 470 945 535 960 555 990 590 1000 612 965M655 1150L625 1155M790 1200L810 1230 820 1290 860 1305 900 1275 925 1285 970 1245 950 1200 965 1180 955 1155M790 1200L835 1190M970 1245L1020 1235 1025 1295 1050 1300 1030 1350 1030 1385 985 1430M815 1310L860 1340 862 1370M820 1290L815 1310M1095 1105L1105 1140 1090 1175 1105 1220 1105 1265M1050 1300L1080 1265 1105 1265 1130 1295 1165 1278 1200 1285 1215 1320M1165 1278L1180 1180 1195 1150 1235 1125"/>
      </g>
      <g class="islands" filter="url(#rough)">
        <path d="M1342 1015L1325 1060 1318 1100 1300 1130 1288 1160 1280 1200 1272 1240 1240 1285 1210 1330" stroke-width="4" stroke-dasharray="9 2 3 4 14 2 2 5"/>
        <path d="M1105 1395L1140 1378M1250 660L1300 625M1240 715L1250 690M1235 800L1255 770M1450 440L1465 458M1285 1315L1280 1330M1355 1365L1358 1370M1395 1195L1400 1192M1425 1185L1428 1185M960 1455L965 1460M1090 1510L1094 1512M1120 1518L1124 1520" stroke-width="2" stroke-dasharray="5 4 2 3"/>
      </g>
    </svg>
    <svg class="isles" viewBox="0 0 900 840">
      <g class="spots">
        <path d="M265 90h.1M310 97h.1M305 105h.1M270 125h6M278 122h.1M332 115h.1M322 130h6M345 102h.1M335 110h.1M296 130h.1M275 140h10M285 146h.1M327 145h.1M311 164h.1M252 164h.1M455 125h.1M462 133h.1M438 134h.1M425 137h.1M417 143h.1M409 150h.1M407 160h.1M398 163h.1M412 172h.1M428 168h.1M445 158h.1M456 143h.1M565 105h.1M632 162h2M503 244h.1M455 388h.1M472 382h4M482 403h.1M497 403h.1M452 408h6M462 422h8M442 418h.1M490 410h.1M475 418h.1M462 445h12M455 455h10M483 443h.1M434 464h.1M417 456h.1M443 464h.1M462 475h18M485 476h.1M455 498h.1M378 492h6M355 498h.1M425 509h.1M426 520h4M444 527h8M460 532h.1M485 522h.1M295 517h.1M305 513h.1M340 534h6M347 531h.1M360 536h.1M376 531h.1M295 556h.1M305 549h4M320 549h.1M385 556h.1M407 567h-3M447 574h.1M458 566h.1M490 558h6M506 569h.1M495 590h.1M514 592h.1M507 608h.1M442 605h.1M440 593h4M384 586h.1M324 578h.1M305 590h4M310 600h.1M302 607h.1M236 581h3M243 588h.1M235 598h.1M205 596h4M431 630h.1M411 664h.1M369 688h.1M368 697h.1M360 705h.1M372 707h.1M378 716h.1M370 713h.1M378 732h6M397 734h.1M359 795h.1M345 798h.1M593 378h.1M618 390h.1M632 388h.1M643 386h.1M657 386h.1M665 399h.1M657 407h.1M632 407h6M630 414h.1M637 427h.1M644 440h.1M600 422h.1M592 432h3M611 422h.1M547 412h.1M545 430h2M520 448h3M565 449h.1M557 470h.1M535 464h.1M574 476h.1M595 462h4M622 477h.1M532 491h.1M563 491h.1M596 495h.1M612 500h.1M587 511h.1M542 537h.1M525 537h.1M524 546h3"/>
      </g>
      <path class="arc" d="M175 626c3-6 12-12 25-13"/>
      <path class="isle" d="M448 596c8-10 22-20 38-25-6 12-18 22-38 25z"/>
    </svg>
    <div class="sidetab"></div>
  </div>
</main>

<footer class="status">
  <div class="locator"><svg viewBox="0 0 20 20"><circle cx="8" cy="8" r="6" fill="none" stroke="#555" stroke-width="1.500"/><path d="M12.500 12.500l6 6" stroke="#555" stroke-width="2"/></svg><span>Type to locate (Ctrl+K)</span></div>
  <span class="st st-coord">Coordinate</span>
  <span class="box b-coord">-7030131,3494284</span>
  <svg class="st-ico"><use href="#extents"/></svg>
  <span class="st st-scale">Scale</span>
  <span class="box b-scale">1:32799416<i class="dd"></i></span>
  <svg class="lock" viewBox="0 0 20 28"><path d="M5 13V7c0-6 10-6 10 0v6" fill="none" stroke="#888" stroke-width="2"/><rect x="2" y="13" width="16" height="14" rx="1" fill="#666"/></svg>
  <span class="st st-mag">Magnifier</span>
  <span class="box b-mag">100%<i class="spin"></i></span>
  <span class="st st-rot">Rotation</span>
  <span class="box b-rot">0.0 °<i class="spin"></i></span>
  <i class="check sm">✓</i>
  <span class="st st-ren">Render</span>
  <svg class="crs"><use href="#crsglobe"/></svg>
  <span class="st st-crs">Unknown CRS</span>
  <svg class="msg" viewBox="0 0 28 28"><path d="M14 1c8 0 13 5 13 12 0 6-3 9-7 11l5 3c-6 1-10 0-13-2C5 24 1 19 1 13 1 6 6 1 14 1z" fill="#5e6c6c"/></svg>
</footer>

<section class="dialog">
  <div class="dlgtitle">
    <svg class="dlglogo"><use href="#logo"/></svg>
    <span>Layer Properties — CN-sheng-A — Information</span>
    <svg class="dlgclose" viewBox="0 0 16 16"><path d="M1 1l14 14M15 1L1 15" stroke="#222"/></svg>
  </div>
  <div class="dlgbody">
    <div class="side">
      <div class="search"><svg viewBox="0 0 20 20"><circle cx="8" cy="8" r="6" fill="#fff" stroke="#888" stroke-width="1.500"/><path d="M12.500 12.500l6 6" stroke="#888" stroke-width="2"/></svg></div>
      <div class="sidelist">
        <ul class="cats">
          <li class="cat sel"><svg class="ic-sel"><use href="#info"/></svg><span>Information</span></li>
          <li class="cat"><svg><use href="#wrench"/></svg><span>Source</span></li>
          <li class="cat"><svg><use href="#brush"/></svg><span>Symbology</span></li>
          <li class="cat"><svg><use href="#labelT"/></svg><span>Labels</span></li>
          <li class="cat"><svg><use href="#masks"/></svg><span>Masks</span></li>
          <li class="cat"><svg><use href="#box3d"/></svg><span>3D View</span></li>
          <li class="cat"><svg><use href="#diag"/></svg><span>Diagrams</span></li>
          <li class="cat"><svg><use href="#fields"/></svg><span>Fields</span></li>
          <li class="cat two"><svg><use href="#form"/></svg><span>Attributes<br>Form</span></li>
          <li class="cat"><svg><use href="#joins"/></svg><span>Joins</span></li>
          <li class="cat two"><svg><use href="#aux"/></svg><span>Auxiliary<br>Storage</span></li>
          <li class="cat"><svg><use href="#actions"/></svg><span>Actions</span></li>
          <li class="cat"><svg><use href="#display"/></svg><span>Display</span></li>
          <li class="cat"><svg><use href="#render"/></svg><span>Rendering</span></li>
          <li class="cat"><svg><use href="#temporal"/></svg><span>Temporal</span></li>
          <li class="cat"><svg><use href="#eps"/></svg><span>Variables</span></li>
        </ul>
        <div class="catbar"><i class="sbtn"><em class="up"></em></i><i class="thumb"></i><i class="sbtn btm"><em class="down"></em></i></div>
      </div>
    </div>
    <div class="split"></div>
    <div class="content">
      <div class="frame">
        <div class="info">
          <div class="row m0 first"><b>Name</b><span>CN-sheng-A</span></div>
          <div class="row m0"><b>Path</b><a class="lnk">E:\Data\common\province\CN-sheng-A.shp</a></div>
          <div class="row m4"><b>Sidecar files</b><span>CN-sheng-A.prj, CN-sheng-A.shx, CN-sheng-A.sbx, CN-sheng-A.sbn, CN-sheng-A.dbf</span></div>
          <div class="row m3"><b>Total size</b><span>24.03 MB</span></div>
          <div class="row"><b>Last modified</b><span>2017年3月1日 21:59:02 (CN-sheng-A.shp)</span></div>
          <div class="row m5"><b>Provider</b><span>ogr</span></div>
          <h2 class="head">Information from provider</h2>
          <hr class="rule">
          <div class="row sub m14"><b>Storage</b><span>ESRI Shapefile</span></div>
          <div class="row sub"><b>Encoding</b><span>GBK</span></div>
          <div class="row sub"><b>Geometry</b><span>Polygon (MultiPolygon)</span></div>
          <div class="row sub"><b>Extent</b><span>-2626227.8125625629909337,406849.7194915190339<br>088 :<br>2207003.2949473671615124,5921680.1428131656721<br>234</span></div>
          <div class="row sub"><b>Feature count</b><span>4,461</span></div>
          <h2 class="head">Coordinate Reference System (CRS)</h2>
          <hr class="rule r2">
          <div class="row crsrow m13"><b>Name</b><span>Krasovsky_1940_Albers</span></div>
          <div class="row crsrow"><b>Units</b><span>meters</span></div>
          <div class="row crsrow m1"><b>Method</b><span>Albers Equal Area</span></div>
        </div>
        <div class="infobar"><i class="sbtn"><em class="up"></em></i><i class="gr1"></i><i class="wh"></i><i class="gr2"></i><i class="sbtn"><em class="down"></em></i></div>
        <div class="redbox rb1"></div>
        <div class="redbox rb2"></div>
      </div>
      <div class="btnrow">
        <span class="btn stylebtn">Style<i class="dd"></i></span>
        <span class="btn ok">OK</span>
        <span class="btn">Cancel</span>
        <span class="btn">Apply</span>
        <span class="btn">Help</span>
      </div>
    </div>
  </div>
</section>
</body>
</html>
```
FILE: styles.css
```css
* { box-sizing: border-box; }
html, body { margin: 0; padding: 0; }
body {
  width: 2160px; height: 1380px; overflow: hidden; position: relative;
  display: flex; flex-direction: column;
  background: #f0f0f0;
  font-family: "Noto Sans", "Noto Sans CJK SC", sans-serif;
  font-size: 18px; color: #111;
}
.defs { position: absolute; }
i, em, b { font-style: normal; }
.svgt { font-family: "Liberation Sans", sans-serif; }
.svgi { font-family: "Liberation Serif", serif; font-style: italic; font-weight: 700; }
.svgm { font-family: "Liberation Mono", monospace; font-weight: 700; }
.svgb { font-family: "Noto Sans", sans-serif; font-weight: 700; }

/* title + menu */
.titlebar { height: 34px; background: #fff; display: flex; align-items: center; padding-left: 2px; flex: none; }
.logo { width: 28px; height: 28px; }
.apptitle { margin-left: 3px; color: #999; font-size: 18px; }
.winbtns { margin-left: auto; display: flex; gap: 53px; padding-right: 29px; align-items: center; }
.winbtn { width: 16px; height: 16px; }
.menubar { height: 28px; flex: none; background: #eeeeee; display: flex; align-items: center; padding-left: 13px; color: #9e9c9c; font-size: 18px; border-bottom: 1px solid #ccc; }
.mi { display: block; }
.w-project { width: 77px; } .w-edit { width: 51px; } .w-view { width: 58px; } .w-layer { width: 63px; }
.w-settings { width: 87px; } .w-plugins { width: 80px; } .w-vector { width: 73px; } .w-raster { width: 71px; }
.w-database { width: 98px; } .w-web { width: 57px; } .w-mesh { width: 64px; } .w-proc { width: 109px; }

/* toolbars */
.toolbar { flex: none; display: flex; align-items: center; background: linear-gradient(#fbfbfb, #eeeeee); }
.tb1 { height: 43px; border-bottom: 1px solid #bdbdbd; padding-left: 3.500px; }
.tb2 { height: 44px; border-bottom: 2px solid #b5b5b5; padding-left: 3.500px; padding-top: 2px; }
.ti { width: 33px; height: 33px; display: flex; align-items: center; justify-content: center; flex: none; }
.ti svg { width: 26px; height: 26px; overflow: visible; }
.ti.off { opacity: .55; filter: grayscale(1); }
.ti.on { background: #dcdcdc; border: 1px solid #aaa; border-radius: 3px; }
.ti.on2 { background: #cfd9e6; border: 1px solid #a7b6c9; border-radius: 3px; }
.grip { display: block; flex: none; height: 24px; background: radial-gradient(circle, #bbb 1px, transparent 1.200px) center / 4px 4px repeat-y; }
.g15 { width: 15px; background-position: 6px 0; }
.g20 { width: 20px; } .g22 { width: 22px; } .g23 { width: 23px; } .g24 { width: 24px; } .g25 { width: 25px; }
.sep { display: block; flex: none; height: 28px; position: relative; }
.sep::after { content: ""; position: absolute; left: 50%; top: 0; bottom: 0; width: 1px; background: #cfcfcf; }
.s10 { width: 10px; } .s8 { width: 14px; }
.caret { display: block; flex: none; width: 18px; height: 7px; position: relative; }
.caret::after { content: ""; position: absolute; left: 3px; top: 0; border: 6px solid transparent; border-top: 7px solid #555; border-bottom: 0; }
.caret.off::after { border-top-color: #bbb; }
.caret.c14 { width: 17px; }
.caret.small { width: 14px; }
.caret.small::after { left: 0; }

/* main */
.main { flex: 1 1 auto; display: flex; min-height: 0; }
.docks { width: 303px; flex: none; display: flex; flex-direction: column; padding-left: 1px; padding-right: 9px; }
.dockhead { height: 26px; display: flex; align-items: center; justify-content: space-between; padding: 0 0 0 3px; margin-top: -2px; font-size: 18px; }
.dockbtns { display: flex; gap: 3px; color: #666; font-size: 13px; padding-right: 1px; }
.dbtn { width: 12px; line-height: 12px; display: block; font-family: "DejaVu Sans", sans-serif; }
.minibar { height: 31px; display: flex; align-items: center; padding-left: 8px; gap: 5px; }
.minibar svg { width: 20px; height: 20px; flex: none; }
.treeframe { height: 378px; position: relative; border: 1px solid #bfbfbf; background: #fff; overflow: hidden; }
.tree { height: 355px; overflow: hidden; padding-top: 1px; }
.node { height: 26px; display: flex; align-items: center; padding-left: 21px; position: relative; line-height: 26px; }
.node svg { width: 24px; height: 24px; margin-right: 6px; flex: none; }
.node.arrow::before { content: ""; position: absolute; left: 7px; top: 7px; border: 5.500px solid transparent; border-left: 6px solid #555; border-right: 0; }
.vbar { position: absolute; right: 0; top: 0; bottom: 22px; width: 21px; background: #fff; border-left: 1px solid #ddd; }
.hbar { position: absolute; left: 0; right: 0; bottom: 0; height: 22px; background: #f5f5f5; border-top: 1px solid #ccc; }
.sbtn { display: flex; align-items: center; justify-content: center; height: 21px; background: #f3f3f3; border-bottom: 1px solid #ddd; flex: none; }
.sbtn.h { width: 21px; height: 21px; border-right: 1px solid #ccc; border-bottom: 0; }
.sbtn em { display: block; width: 0; height: 0; border: 5.500px solid transparent; }
em.up { border-bottom: 6px solid #555; border-top: 0; }
em.down { border-top: 6px solid #555; border-bottom: 0; }
em.left { border-right: 6px solid #555; border-left: 0; }
.dockhead.lh { margin-top: 8px; }
.layers .minibar { height: 32px; gap: 5px; padding-bottom: 4px; }
.layers { flex: 1; display: flex; flex-direction: column; min-height: 0; }
.layertree { flex: 1; background: #fff; border: 1px solid #bfbfbf; }
.layerrow { height: 28px; display: flex; align-items: center; background: #f3f3f3; padding-left: 33px; }
.check { display: flex; align-items: center; justify-content: center; width: 20px; height: 20px; background: #fff; border: 1px solid #bbb; font-family: "DejaVu Sans", sans-serif; font-weight: 700; font-size: 17px; color: #111; flex: none; }
.swatch { display: block; width: 21px; height: 21px; background: #8a4a70; border: 1px solid #666; margin-left: 7px; flex: none; }
.lname { font-weight: 700; text-decoration: underline; margin-left: 6px; font-size: 18.600px; }

/* map */
.canvas { flex: 1; position: relative; background: #fff; border-left: 1px solid #b5b5b5; border-right: 1px solid #bbb; border-bottom: 1px solid #c0c0c0; overflow: hidden; }
.map { position: absolute; left: 756px; top: 141px; width: 880px; height: 1000px; }
.land { fill: #c23a3a; stroke: #262626; stroke-width: 1.400; vector-effect: non-scaling-stroke; stroke-linejoin: round; }
.border { fill: none; stroke: #262626; stroke-width: 1.400; vector-effect: non-scaling-stroke; stroke-linejoin: round; }
.islands path { fill: none; stroke: #2b2b2b; vector-effect: non-scaling-stroke; }
.isles { position: absolute; left: 1256px; top: 851px; width: 300px; height: 280px; }
.spots path { fill: none; stroke: #2b2b2b; stroke-width: 7px; stroke-linecap: round; }
.arc { fill: none; stroke: #2b2b2b; stroke-width: 6; stroke-linecap: round; }
.isle { fill: #c23a3a; stroke: #2b2b2b; stroke-width: 4; }
.sidetab { position: absolute; right: 0; top: 222px; width: 20px; height: 62px; border-radius: 3px 0 0 3px;
  background: linear-gradient(#e8a33d, #e8a33d) 7px 27px / 6px 2px no-repeat,
              repeating-linear-gradient(#7a7a7a 0 1px, transparent 1px 4px) 7px 7px / 6px 20px no-repeat,
              repeating-linear-gradient(#7a7a7a 0 1px, transparent 1px 4px) 7px 35px / 6px 20px no-repeat,
              #444; }

/* status bar */
.status { height: 36px; flex: none; display: flex; align-items: center; font-family: "Liberation Mono", monospace; font-size: 13.400px; color: #222; background: #f0f0f0; }
.locator { width: 366px; height: 29px; margin-left: 3px; display: flex; align-items: center; background: #fff; border: 1px solid #bbb; border-radius: 2px; color: #888; font-size: 15px; padding-left: 12px; gap: 8px; flex: none; }
.locator svg { width: 20px; height: 20px; }
.st { flex: none; white-space: nowrap; }
.st-coord { margin-left: 663px; width: 84px; }
.box { height: 30px; background: #fff; border: 1px solid #bbb; border-radius: 2px; display: flex; align-items: center; padding-left: 6px; flex: none; position: relative; font-size: 13.400px; }
.b-coord { width: 143px; }
.st-ico { width: 26px; height: 28px; margin-left: 4px; flex: none; }
.st-scale { margin-left: 12px; width: 44px; }
.b-scale { width: 115px; padding-left: 4px; }
.dd { position: absolute; right: 10px; top: 12px; border: 5.500px solid transparent; border-top: 7px solid #555; border-bottom: 0; }
.lock { width: 17px; height: 26px; margin-left: 16px; flex: none; }
.st-mag { margin-left: 8px; width: 76px; }
.b-mag { width: 116px; }
.spin { position: absolute; right: 0; top: 0; bottom: 0; width: 20px; border-left: 1px solid #ddd; }
.spin::before { content: ""; position: absolute; left: 5px; top: 6px; border: 5px solid transparent; border-bottom: 7px solid #555; border-top: 0; }
.spin::after { content: ""; position: absolute; left: 5px; bottom: 6px; border: 5px solid transparent; border-top: 7px solid #555; border-bottom: 0; }
.st-rot { margin-left: 10px; width: 73px; }
.b-rot { width: 109px; }
.check.sm { margin-left: 6px; }
.st-ren { margin-left: 8px; width: 66px; }
.crs { width: 24px; height: 24px; flex: none; }
.st-crs { margin-left: 0; width: 120px; }
.msg { width: 24px; height: 26px; flex: none; }

/* dialog */
.dialog { position: absolute; left: 203px; top: 314px; width: 827px; height: 775px; background: #f0f0f0; border: 1px solid #7a7a7a; box-shadow: 0 3px 14px rgba(0,0,0,.35); display: flex; flex-direction: column; }
.dlgtitle { height: 43px; flex: none; background: #fff; display: flex; align-items: center; padding-left: 11px; font-size: 18.400px; }
.dlgtitle span { margin-bottom: 4px; }
.dlglogo { width: 25px; height: 25px; margin-right: 3px; flex: none; }
.dlgclose { width: 16px; height: 16px; margin-left: auto; margin-right: 16px; }
.dlgbody { flex: 1; display: flex; min-height: 0; }
.side { width: 159px; flex: none; background: #5a5a5a; display: flex; flex-direction: column; }
.search { height: 30px; background: #fff; border: 1px solid #5aa7e6; border-radius: 2px; padding-left: 11px; display: flex; align-items: center; flex: none; }
.search svg { width: 20px; height: 20px; }
.sidelist { margin-top: 8px; flex: 1; display: flex; min-height: 0; }
.cats { list-style: none; margin: 0; padding: 0; width: 138px; flex: none; overflow: hidden; }
.cat { height: 41px; display: flex; align-items: center; color: #e8e8e8; white-space: nowrap; padding-left: 4px; }
.cat.two { height: 56px; line-height: 24px; }
.cat svg { width: 32px; height: 28px; flex: none; margin-right: 7px; }
.cat.sel { background: #f0f0f0; color: #111; }
.cat svg.ic-sel { width: 34px; height: 34px; margin-right: 7px; }
.catbar { width: 21px; flex: none; display: flex; flex-direction: column; background: #e2e2e2; }
.catbar .thumb { display: block; height: 463px; background: #fff; flex: none; }
.catbar .sbtn { height: 21px; }
.catbar .btm { margin-top: auto; height: 26px; background: #f0f0f0; }
.split { width: 6px; flex: none; background: #f0f0f0; }
.content { flex: 1; min-width: 0; display: flex; flex-direction: column; padding-right: 4px; padding-top: 4px; }
.frame { height: 685px; flex: none; background: #fff; border: 1px solid #bbb; display: flex; position: relative; }
.info { flex: 1; min-width: 0; height: 683px; overflow: hidden; padding: 4px 0 0 4px; }
.infobar { width: 20px; flex: none; display: flex; flex-direction: column; border-left: 1px solid #ddd; }
.gr1 { display: block; height: 15px; background: #e2e2e2; }
.wh { display: block; height: 179px; background: #fff; border-top: 1px solid #ccc; border-bottom: 1px solid #ccc; }
.gr2 { display: block; flex: 1; background: #e2e2e2; }
.row { display: grid; grid-template-columns: 132px 1fr; padding-left: 33px; line-height: 25px; margin-top: 2px; font-size: 17.200px; }
.row b { font-weight: 700; white-space: nowrap; font-size: 16.800px; }
.row > span, .row > a { display: block; width: 465px; }
.row.sub { grid-template-columns: 135px 1fr; }
.row.crsrow { grid-template-columns: 136px 1fr; }
.first { margin-top: 0; }
.m0 { margin-top: 0; } .m1 { margin-top: 1px; } .m3 { margin-top: 3px; } .m4 { margin-top: 4px; } .m5 { margin-top: 5px; } .m13 { margin-top: 13px; } .m14 { margin-top: 14px; }
.lnk { color: #4a90d9; text-decoration: underline; white-space: nowrap; }
.head { margin: 46px 0 0 11px; height: 40px; line-height: 40px; font-size: 25px; font-weight: 400; color: #5c9a2e; white-space: nowrap; }
.rule { margin: 6px 0 0 0; width: 627px; border: 0; height: 1px; background: #999; }
.rule.r2 { margin-top: 7px; }
.redbox { position: absolute; border: 6px solid #f93a3a; pointer-events: none; }
.rb1 { left: 12px; top: 285px; width: 386px; height: 100px; }
.rb2 { left: 145px; top: 591px; width: 265px; height: 56px; }
.btnrow { flex: 1; display: flex; align-items: flex-start; justify-content: flex-end; gap: 9px; padding-top: 9px; }
.btn { width: 80px; height: 29px; border: 1px solid #bcbcbc; border-radius: 2px; background: linear-gradient(#fafafa, #ececec); font-family: "Liberation Mono", monospace; font-size: 15px; display: flex; align-items: center; justify-content: center; color: #222; }
.btn.ok { border-color: #6ea8dc; background: linear-gradient(#f4f9fd, #dfe9f3); }
.stylebtn { width: 80px; margin-right: auto; justify-content: flex-start; padding-left: 6px; position: relative; }
.stylebtn .dd { right: 6px; top: 9px; }
```
